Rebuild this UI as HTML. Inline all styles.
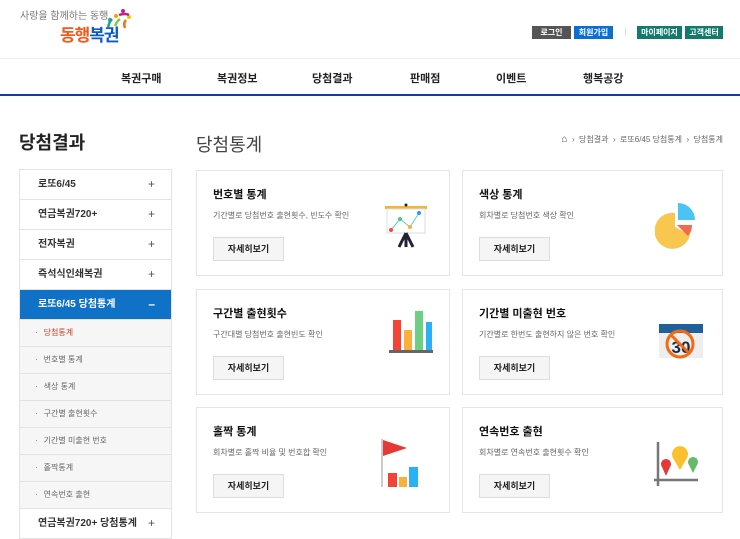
<!DOCTYPE html>
<html><head><meta charset="utf-8"><style>
*{margin:0;padding:0;box-sizing:border-box}
body{width:740px;height:523px;overflow:hidden;background:#fff;font-family:"Liberation Sans","Noto Sans CJK KR",sans-serif;color:#222;position:relative}
.a{position:absolute}
.btn{position:absolute;top:26px;height:13px;font-size:8px;color:#fff;text-align:center;line-height:13px;font-weight:bold}
.nav{position:absolute;top:70px;font-size:11px;font-weight:bold;color:#222}
.side{position:absolute;left:19px;width:153px;border:1px solid #e3e3e3;border-bottom:none}
.side div{height:30px;border-bottom:1px solid #e3e3e3;font-size:10px;line-height:29px;padding-left:18px;position:relative;font-weight:bold;color:#333}
.side div.p:after{content:"+";position:absolute;right:16px;top:0;font-weight:normal;font-size:12px;color:#555}
.side div.on{background:#0f72c6;color:#fff}
.side div.on:after{content:"–";position:absolute;right:16px;top:0;font-size:12px}
.side div.s{height:27px;line-height:26px;background:#f6f6f6;font-weight:normal;font-size:8px;color:#666;padding-left:15px}
.side div.s:before{content:"·";margin-right:6px}
.card{position:absolute;border:1px solid #e4e4e4;background:#fff;height:106px}
.card h3{position:absolute;left:16px;top:15px;font-size:11px;font-weight:bold;color:#111}
.card p{position:absolute;left:16px;top:39px;font-size:8px;color:#666}
.card .b{position:absolute;left:16px;top:66px;width:71px;height:24px;border:1px solid #ddd;background:#f5f5f5;font-size:9px;font-weight:bold;text-align:center;line-height:22px}
.card svg{position:absolute}
</style></head><body>
<div class="a" style="left:20px;top:7px;font-size:10px;color:#777">사랑을 함께하는 동행</div>
<div class="a" style="left:60px;top:21px;font-size:17px;font-weight:bold;letter-spacing:-1px"><span style="color:#f25b1b">동행</span><span style="color:#0a5bc4">복권</span></div>
<svg class="a" style="left:105px;top:6px" width="26" height="24"><circle cx="5" cy="14" r="2" fill="#1da58a"/><circle cx="11" cy="10" r="2" fill="#f2a100"/><circle cx="18" cy="5" r="2" fill="#c3208d"/><circle cx="24" cy="11" r="2" fill="#f9c700"/><path d="M3 22 Q4 16 7 13" stroke="#18a0a0" stroke-width="2.5" fill="none"/><path d="M10 20 Q12 15 15 13" stroke="#8bc34a" stroke-width="2.5" fill="none"/><path d="M14 9 Q20 7 24 9" stroke="#c3208d" stroke-width="2.5" fill="none"/><path d="M20 22 Q18 17 21 14" stroke="#f0701a" stroke-width="2.5" fill="none"/></svg>
<div class="btn" style="left:532px;width:39px;background:#555">로그인</div>
<div class="btn" style="left:574px;width:39px;background:#0b6fd0">회원가입</div>
<div class="a" style="left:625px;top:28px;width:1px;height:8px;background:#ddd"></div>
<div class="btn" style="left:637px;width:45px;background:#137a6c">마이페이지</div>
<div class="btn" style="left:685px;width:38px;background:#137a6c">고객센터</div>
<div class="a" style="left:0;top:58px;width:740px;height:1px;background:#eee"></div>
<div class="nav" style="left:121px">복권구매</div>
<div class="nav" style="left:217px">복권정보</div>
<div class="nav" style="left:312px">당첨결과</div>
<div class="nav" style="left:410px">판매점</div>
<div class="nav" style="left:496px">이벤트</div>
<div class="nav" style="left:583px">행복공강</div>
<div class="a" style="left:0;top:94px;width:740px;height:2px;background:#0b3fa0"></div>
<div class="a" style="left:19px;top:129px;font-size:18px;font-weight:bold;color:#222">당첨결과</div>
<div class="a" style="left:196px;top:131px;font-size:18px;color:#444">당첨통계</div>
<div class="a" style="right:17px;top:134px;font-size:8px;color:#666;white-space:nowrap"><span style="font-size:10px;color:#444">⌂</span> &nbsp;›&nbsp; 당첨결과 &nbsp;›&nbsp; 로또6/45 당첨통계 &nbsp;›&nbsp; 당첨통계</div>
<div class="side" style="top:169px">
<div class="p">로또6/45</div><div class="p">연금복권720+</div><div class="p">전자복권</div><div class="p">즉석식인쇄복권</div>
<div class="on">로또6/45 당첨통계</div>
<div class="s" style="color:#d2402a">당첨통계</div><div class="s">번호별 통계</div><div class="s">색상 통계</div><div class="s">구간별 출현횟수</div><div class="s">기간별 미출현 번호</div><div class="s">홀짝통계</div><div class="s">연속번호 출현</div>
<div class="p">연금복권720+ 당첨통계</div>
</div>

<div class="card" style="left:196px;top:170px;width:254px"><h3>번호별 통계</h3><p>기간별로 당첨번호 출현횟수, 빈도수 확인</p><div class="b">자세히보기</div>
<svg style="left:186px;top:32px" width="46" height="48"><rect x="2" y="3" width="42" height="3" fill="#f5b53b"/><rect x="4" y="6" width="38" height="24" fill="#fff" stroke="#ddd"/><circle cx="23" cy="2" r="1.5" fill="#223"/><polyline points="8,27 17,16 27,24 36,10" stroke="#6cc" fill="none"/><circle cx="8" cy="27" r="2" fill="#f44"/><circle cx="17" cy="16" r="2" fill="#4c7"/><circle cx="27" cy="24" r="2" fill="#fa3"/><circle cx="36" cy="10" r="2" fill="#29f"/><path d="M23 30 L16 44 M23 30 L30 44 M23 30 L23 44" stroke="#223" stroke-width="3"/></svg></div>
<div class="card" style="left:462px;top:170px;width:261px"><h3>색상 통계</h3><p>회차별로 당첨번호 색상 확인</p><div class="b">자세히보기</div>
<svg style="left:192px;top:30px" width="44" height="48"><path d="M20 12 A18 18 0 1 0 35 34 L20 26Z" fill="#f9c74f"/><path d="M22 24 L37 24 A16 16 0 0 1 33 35Z" fill="#f26b4f"/><path d="M23 2 A17 17 0 0 1 40 19 L23 19Z" fill="#4cc3f5"/></svg></div>

<div class="card" style="left:196px;top:289px;width:254px"><h3>구간별 출현횟수</h3><p>구간대별 당첨번호 출현빈도 확인</p><div class="b">자세히보기</div>
<svg style="left:188px;top:20px" width="48" height="44"><rect x="8" y="10" width="8" height="30" fill="#f44336"/><rect x="19" y="20" width="8" height="20" fill="#fbb03b"/><rect x="30" y="1" width="8" height="39" fill="#6ccf83"/><rect x="41" y="12" width="6" height="28" fill="#2ab0f5"/><rect x="4" y="40" width="44" height="3" fill="#666"/></svg></div>
<div class="card" style="left:462px;top:289px;width:261px"><h3>기간별 미출현 번호</h3><p>기간별로 한번도 출현하지 않은 번호 확인</p><div class="b">자세히보기</div>
<svg style="left:194px;top:28px" width="48" height="42"><rect x="2" y="6" width="44" height="34" fill="#eee"/><rect x="2" y="6" width="44" height="9" fill="#1f5f9c"/><text x="24" y="35" text-anchor="middle" font-size="17" font-weight="bold" fill="#1a2a44" font-family="Liberation Sans">30</text><circle cx="23" cy="26" r="13" fill="none" stroke="#f26a12" stroke-width="3"/><line x1="14" y1="17" x2="32" y2="35" stroke="#f26a12" stroke-width="3"/></svg></div>

<div class="card" style="left:196px;top:407px;width:254px"><h3>홀짝 통계</h3><p>회차별로 홀짝 비율 및 번호합 확인</p><div class="b">자세히보기</div>
<svg style="left:184px;top:29px" width="48" height="52"><rect x="0" y="2" width="2" height="48" fill="#ccc"/><path d="M2 3 L26 11 L2 19Z" fill="#e53935"/><rect x="7" y="36" width="9" height="14" fill="#f44336"/><rect x="18" y="40" width="8" height="10" fill="#fbb03b"/><rect x="28" y="30" width="9" height="20" fill="#2ab0f5"/></svg></div>
<div class="card" style="left:462px;top:407px;width:261px"><h3>연속번호 출현</h3><p>회차별로 연속번호 출현횟수 확인</p><div class="b">자세히보기</div>
<svg style="left:189px;top:32px" width="48" height="46"><path d="M6 2 L6 46 M2 40 L46 40" stroke="#777" stroke-width="2.5"/><path d="M14 36 L10 27 A5 5 0 1 1 18 27Z" fill="#e53935"/><path d="M28 30 L21 18 A8 8 0 1 1 35 18Z" fill="#fbc02d"/><path d="M41 33 L37 25 A5 5 0 1 1 45 25Z" fill="#66bb6a"/></svg></div>
</body></html>
